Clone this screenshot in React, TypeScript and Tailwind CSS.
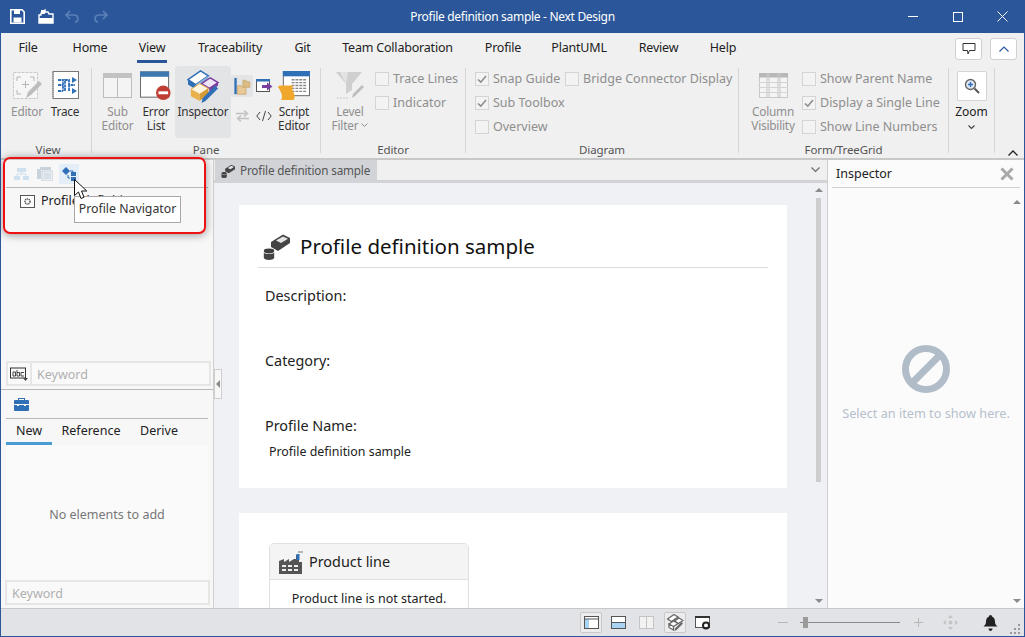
import React from "react";

const F = "font-['Noto_Sans',sans-serif]";

function Check({ label, checked, w }: { label: string; checked?: boolean; w?: string }) {
  return (
    <div className={`flex items-center h-6 gap-[4px] text-[12.5px] text-[#8e8e8e] whitespace-nowrap ${w ?? ""}`}>
      <span className="w-[14px] h-[14px] border border-[#d4d4d4] bg-[#f3f3f3] flex items-center justify-center shrink-0">
        {checked && (
          <svg width="10" height="10" viewBox="0 0 10 10"><path d="M1 5.5 L3.8 8.2 L9 2" fill="none" stroke="#8c8c8c" strokeWidth="1.6" /></svg>
        )}
      </span>
      <span>{label}</span>
    </div>
  );
}

function GroupSep() {
  return <div className="w-px bg-[#d6d6d6] self-stretch my-[5px] shrink-0" />;
}

function Group({ w, label, children }: { w: string; label: string; children: React.ReactNode }) {
  return (
    <div className={`flex flex-col shrink-0 h-full ${w}`}>
      <div className="flex-1 flex min-h-0">{children}</div>
      <div className="h-[16px] text-center text-[11.5px] tracking-[-0.1px] leading-[16px] text-[#555]">{label}</div>
    </div>
  );
}

function BigBtn({ w, icon, lines, dim, cls, top }: { w: string; icon: React.ReactNode; lines: React.ReactNode[]; dim?: boolean; cls?: string; top?: string }) {
  return (
    <div className={`flex flex-col items-center shrink-0 ${top ?? "pt-[8px]"} ${w} ${cls ?? ""}`}>
      <div className="h-[29px] w-full flex items-start justify-center">{icon}</div>
      <div className={`mt-[4px] text-center text-[11.8px] tracking-[-0.2px] leading-[14px] ${dim ? "text-[#8e8e8e]" : "text-[#333]"}`}>
        {lines.map((l, i) => <div key={i} className="whitespace-nowrap flex items-center justify-center">{l}</div>)}
      </div>
    </div>
  );
}

const EditorIcon = () => (
  <svg width="30" height="30" viewBox="0 0 30 30">
    <rect x="1.5" y="1.5" width="24" height="26" fill="#f6f6f6" stroke="#c8c8c8" strokeDasharray="3 1" />
    <path d="M9 6H5v4M18 6h4v4M5 19v4h4" fill="none" stroke="#b5b5b5" />
    <path d="M13.5 10v7M10 13.5h7" stroke="#b5b5b5" />
    <path d="M14 27l2-6 11-11 3 3-11 11z" fill="#bdbdbd" />
  </svg>
);
const TraceIcon = () => (
  <svg width="27" height="28" viewBox="0 0 27 28">
    <rect x="1" y="0.5" width="25.5" height="27" fill="#fff" stroke="#777" />
    <path d="M1 1v26" stroke="#999" strokeDasharray="1 1" strokeWidth="2" />
    <path d="M6 9h5v11M6 14h5M6 20h5M13 20V9h4v5h6M17 20v-6" fill="none" stroke="#2f6fb5" strokeWidth="1.8" strokeDasharray="3 0.6" />
    <path d="M20 6l5 3-5 3zM20 17l5 3-5 3z" fill="#2f6fb5" />
  </svg>
);
const SubEditorIcon = () => (
  <svg width="29" height="25" viewBox="0 0 29 25">
    <rect x="0.5" y="0.5" width="28" height="24" fill="#f4f4f4" stroke="#bdbdbd" />
    <rect x="0" y="0" width="29" height="5" fill="#c2c2c2" />
    <path d="M14.5 5v19" stroke="#bdbdbd" />
  </svg>
);
const ErrorListIcon = () => (
  <svg width="33" height="30" viewBox="0 0 33 30">
    <rect x="0.5" y="0.5" width="29" height="26" fill="#fff" stroke="#666" />
    <rect x="0" y="0" width="30" height="5.5" fill="#3f77b0" />
    <circle cx="24" cy="22" r="7.5" fill="#bf3d32" />
    <rect x="19" y="20.5" width="10" height="3" fill="#fff" />
  </svg>
);
const InspectorIcon = ({ s = 33 }: { s?: number }) => (
  <svg width={s} height={s} viewBox="0 0 34 34">
    <path d="M1 10 L14 1 L22 6 L9 15z" fill="#fff" stroke="#2f6fb5" strokeWidth="1.5" />
    <path d="M1 10 L9 15 V20 L1 15z" fill="#2f6fb5" />
    <path d="M9 15 L22 6 V10 L9 20z" fill="#8cb0d6" />
    <path d="M15 14 L24 8 L32 13 L23 19z" fill="#efe6f5" stroke="#7a3fa0" strokeWidth="1.5" />
    <path d="M23 19 L32 13 V16 L23 23z" fill="#7a3fa0" />
    <path d="M4 20 L13 14 L22 19 L13 25z" fill="#fff4dc" stroke="#e6b04a" />
    <path d="M4 20 L13 25 V32 L4 27z" fill="#e9b04c" />
    <path d="M13 25 L22 19 V24 L13 32z" fill="#d59a33" />
    <path d="M15 34 l1-5 L29 16 l3 3 L19 32z" fill="#2f6fb5" />
  </svg>
);
const FoldersIcon = () => (
  <svg width="17" height="17" viewBox="0 0 21 22">
    <rect x="0" y="0" width="3" height="21" fill="#2f6fb5" />
    <path d="M11 3h4l1 2h4v7H11z" fill="#dcbc86" stroke="#c9a56a" />
    <path d="M4 10h5l1 2h5v9H4z" fill="#e8c995" stroke="#c9a56a" />
  </svg>
);
const PaneArrowIcon = () => (
  <svg width="17" height="14" viewBox="0 0 17 14">
    <rect x="0.5" y="0.5" width="13" height="12" fill="#fff" stroke="#555" />
    <rect x="0" y="0" width="14" height="2.5" fill="#2f6fb5" />
    <path d="M6 6h5V3.500L16.500 7.500 11 11.500V9H6z" fill="#7a3fa0" />
  </svg>
);
const ScriptIcon = () => (
  <svg width="32" height="30" viewBox="0 0 33 31">
    <rect x="5.500" y="0.500" width="27" height="25" fill="#fff" stroke="#666" />
    <rect x="5" y="0" width="28" height="5.500" fill="#2f6fb5" />
    <path d="M14 9h15M14 12h15M14 15h15M14 18h15M14 21h15" stroke="#888" strokeWidth="1.400" strokeDasharray="3 1" />
    <path d="M3 15h13c-2 2-1 5 0 7 1 3 2 5 0 8H3c2-3 1-5 0-8-1-2-2-5-3-5 0-1 1-2 3-2z" fill="#f0a82c" />
  </svg>
);
const FilterIcon = () => (
  <svg width="30" height="30" viewBox="0 0 30 30">
    <path d="M1 1h26L17 13v6l-6 4V13z" fill="#cfcfcf" />
    <path d="M5 1h8L11 13z" fill="#e3e3e3" />
    <path d="M17 27l1-4 9-9 2 2-9 9z" fill="#bdbdbd" />
    <path d="M2 27h12" stroke="#c8c8c8" strokeDasharray="2 1" />
  </svg>
);
const ColumnIcon = () => (
  <svg width="29" height="25" viewBox="0 0 29 25">
    <rect x="0.5" y="0.5" width="28" height="24" fill="#f4f4f4" stroke="#c8c8c8" />
    <rect x="0" y="0" width="29" height="4.5" fill="#b8b8b8" />
    <path d="M8 0v25M10 0v25M19 0v25M21 0v25" stroke="#c6c6c6" />
    <path d="M0 9.5h29M0 14.5h29M0 19.5h29" stroke="#d4d4d4" />
  </svg>
);

const ProfileIcon = ({ s = 27 }: { s?: number }) => (
  <svg width={s} height={s} viewBox="0 0 27 27">
    <path d="M8 9 L20 1.5 L27 5 V10 L15 18 L8 14z" fill="#444" />
    <path d="M13 7.5 L20 3.5 L25 5.8 L18 10z" fill="#e4e4e4" />
    <ellipse cx="6" cy="18" rx="5.2" ry="2.4" fill="#3e3e3e" />
    <path d="M0.8 19.5 V25 c1 2.6 9.4 2.6 10.4 0 V19.5 c-1.5 2 -9 2 -10.4 0z" fill="#444" />
  </svg>
);

const FactoryIcon = () => (
  <svg width="24" height="24" viewBox="0 0 24 24">
    <path d="M0 24V11l5-2v3l5-3v3l5-3 2 0V5h3v7h3v12z" fill="#555" />
    <rect x="17.5" y="4" width="3" height="6" fill="#2f6fb5" />
    <path d="M19 2h5" stroke="#777" />
    <path d="M3 15h4v2H3zM9 15h4v2H9zM15 15h4v2h-4zM3 19h4v2H3zM9 19h4v2H9zM15 19h4v2h-4z" fill="#eee" />
  </svg>
);

function KeywordBox({ icon, cls }: { icon?: boolean; cls: string }) {
  return (
    <div className={`flex items-center h-[25px] border-2 border-[#e6e6e6] bg-[#f9f9f9] text-[12.5px] leading-[23px] text-[#b0b0b0] ${cls}`}>
      {icon && (
        <div className="w-[24px] h-full border-r-2 border-[#e6e6e6] flex items-center justify-center shrink-0">
          <svg width="18" height="14" viewBox="0 0 18 14">
            <rect x="0.5" y="1" width="15" height="10" fill="none" stroke="#333" />
            <path d="M3 5h2.500v4H3zM7 3v6h2.500V5.500H7M11 5.500h3M11 5.500v3.500h3" fill="none" stroke="#333" strokeWidth="0.9" />
            <path d="M13 11h5l-2.500 3z" fill="#444" />
          </svg>
        </div>
      )}
      <span className="pl-[5px] pt-[1px]">Keyword</span>
    </div>
  );
}

const Tri = () => (
  <svg width="8" height="4" viewBox="0 0 10 5"><path d="M0 5 L5 0 L10 5z" fill="#8a8a8a" /></svg>
);
const TriDown = () => (
  <svg width="8" height="4" viewBox="0 0 10 5"><path d="M0 0 L5 5 L10 0z" fill="#8a8a8a" /></svg>
);

export default function App() {
  const tabs: [string, string][] = [
    ["File", "w-[54px]"], ["Home", "w-[70px]"], ["View", "w-[54px]"], ["Traceability", "w-[102px]"],
    ["Git", "w-[43px]"], ["Team Collaboration", "w-[147px]"], ["Profile", "w-[64px]"], ["PlantUML", "w-[88px]"],
    ["Review", "w-[71px]"], ["Help", "w-[58px]"],
  ];
  return (
    <div className={`relative w-[1025px] h-[637px] overflow-hidden bg-[#2b579a] flex flex-col ${F}`}>
      {/* Title bar */}
      <div className="h-[33px] shrink-0 flex items-center text-white relative">
        <div className="flex items-center pl-[10px]">
          <svg width="15" height="15" viewBox="0 0 15 15">
            <path d="M0.8 0.8H12L14.2 3V14.2H0.8z" fill="none" stroke="#fff" strokeWidth="1.6" />
            <rect x="4" y="1" width="6" height="4" fill="#fff" />
            <rect x="3.5" y="8.5" width="8" height="5" fill="#fff" />
          </svg>
          <svg width="16" height="15" viewBox="0 0 16 15" className="ml-[13px]">
            <path d="M1 6h2V4l4-3v2h3l1 2h4v9H1z" fill="none" stroke="#fff" strokeWidth="1.4" />
            <path d="M1 9h14v5H1zM3 1h4v4H3z" fill="#fff" />
          </svg>
          <svg width="15" height="13" viewBox="0 0 15 13" className="ml-[11px]">
            <path d="M5 1L1 5l4 4M1 5h8c5 0 5 7 1 7" fill="none" stroke="#5b80b8" strokeWidth="1.7" />
          </svg>
          <svg width="15" height="13" viewBox="0 0 15 13" className="ml-[13px]">
            <path d="M10 1l4 4-4 4M14 5H6c-5 0-5 7-1 7" fill="none" stroke="#5b80b8" strokeWidth="1.7" />
          </svg>
        </div>
        <div className="absolute left-0 right-0 text-center text-[12px] tracking-[-0.3px] leading-[36px]">Profile definition sample - Next Design</div>
        <div className="ml-auto flex items-center">
          <div className="w-[45px] flex justify-center"><div className="w-[10px] h-px bg-white" /></div>
          <div className="w-[45px] flex justify-center"><div className="w-[10px] h-[10px] border border-white" /></div>
          <div className="w-[45px] flex justify-center">
            <svg width="11" height="11" viewBox="0 0 11 11"><path d="M0.5 0.5L10.5 10.5M10.5 0.5L0.5 10.5" stroke="#fff" /></svg>
          </div>
        </div>
      </div>

      {/* Client */}
      <div className="flex-1 min-h-0 mx-px mb-px bg-[#f0f0f0] flex flex-col">
        {/* Tabs */}
        <div className="h-[30px] shrink-0 flex items-stretch relative text-[12.5px] tracking-[-0.2px] text-[#222]">
          {tabs.map(([t, w]) => (
            <div key={t} className={`relative flex items-center justify-center ${w} whitespace-nowrap`}>
              {t}
              {t === "View" && <div className="absolute bottom-0 left-[12px] w-[30px] h-[3px] bg-[#2b579a]" />}
            </div>
          ))}
          <div className="ml-auto flex items-center gap-[8px] pr-[7px] pt-[1px]">
            <div className="w-[27px] h-[22px] bg-white border border-[#d0d0d0] rounded-[3px] flex items-center justify-center">
              <svg width="14" height="14" viewBox="0 0 14 14"><path d="M1 1.500h12v7H7.500L6 12 5.500 8.500H1z" fill="none" stroke="#333" /></svg>
            </div>
            <div className="w-[27px] h-[22px] bg-white border border-[#d0d0d0] rounded-[3px] flex items-center justify-center">
              <svg width="10" height="6" viewBox="0 0 10 6"><path d="M0.500 5.500L5 1l4.500 4.500" fill="none" stroke="#2b579a" strokeWidth="1.200" /></svg>
            </div>
          </div>
        </div>

        {/* Ribbon body */}
        <div className="h-[95px] shrink-0 flex items-stretch pl-[4px] relative">
          <Group w="w-[86px]" label="View">
            <BigBtn w="w-[42px] ml-[1px]" dim icon={<EditorIcon />} lines={["Editor"]} />
            <BigBtn w="w-[34px]" icon={<TraceIcon />} lines={["Trace"]} />
          </Group>
          <GroupSep />
          <Group w="w-[228px]" label="Pane">
            <BigBtn w="w-[45px] ml-[3px]" dim icon={<div className="pt-[2px]"><SubEditorIcon /></div>} lines={["Sub", "Editor"]} />
            <BigBtn w="w-[32px]" icon={<ErrorListIcon />} lines={["Error", "List"]} />
            <div className="ml-[3px] w-[56px] h-[72px] mt-[3px] bg-[#e3e4e6] rounded-[3px] shrink-0">
              <BigBtn w="w-full" top="pt-[5px]" icon={<div className="-mt-[1px]"><InspectorIcon /></div>} lines={["Inspector"]} />
            </div>
            <div className="w-[47px] flex flex-col shrink-0">
              <div className="flex items-center h-[22px] mt-[12px]">
                <div className="w-[22px] h-[22px] bg-[#e3e4e6] rounded-[2px] flex items-center justify-center"><FoldersIcon /></div>
                <div className="ml-[3px]"><PaneArrowIcon /></div>
              </div>
              <div className="flex items-center h-[26px] pl-[5px] gap-[7px] mt-[6px]">
                <svg width="13" height="12" viewBox="0 0 13 12"><path d="M0 3.500h10M8 0.500l3.500 3-3.500 3M13 8.500H3M5 5.500l-3.500 3 3.500 3" fill="none" stroke="#c0c0c0" strokeWidth="1.400" /></svg>
                <svg width="16" height="12" viewBox="0 0 16 12"><path d="M4 2L0.800 6 4 10M12 2l3.200 4L12 10M9.500 1L6.500 11" fill="none" stroke="#444" /></svg>
              </div>
            </div>
            <BigBtn w="w-[32px]" icon={<ScriptIcon />} lines={["Script", "Editor"]} />
          </Group>
          <GroupSep />
          <Group w="w-[144px]" label="Editor">
            <BigBtn w="w-[50px] ml-[4px]" dim icon={<FilterIcon />} lines={["Level", <>Filter<svg width="7" height="5" viewBox="0 0 7 5" className="ml-[3px]"><path d="M0.500 0.500L3.500 3.500 6.500 0.500" fill="none" stroke="#8e8e8e" /></svg></>]} />
            <div className="pt-[4px]">
              <Check label="Trace Lines" />
              <Check label="Indicator" />
            </div>
          </Group>
          <GroupSep />
          <Group w="w-[272px]" label="Diagram">
            <div className="pt-[4px] pl-[9px] w-[99px] shrink-0">
              <Check checked label="Snap Guide" />
              <Check checked label="Sub Toolbox" />
              <Check label="Overview" />
            </div>
            <div className="pt-[4px]">
              <Check label="Bridge Connector Display" />
            </div>
          </Group>
          <GroupSep />
          <Group w="w-[209px]" label="Form/TreeGrid">
            <BigBtn w="w-[56px] ml-[6px]" dim icon={<div className="pt-[2px]"><ColumnIcon /></div>} lines={["Column", "Visibility"]} />
            <div className="pt-[4px] ml-[1px]">
              <Check label="Show Parent Name" />
              <Check checked label="Display a Single Line" />
              <Check label="Show Line Numbers" />
            </div>
          </Group>
          <GroupSep />
          <div className="w-[45px] shrink-0 flex flex-col items-center pt-[8px]">
            <div className="w-[30px] h-[30px] bg-white border border-[#d4d4d4] rounded-[2px] flex items-center justify-center">
              <svg width="16" height="16" viewBox="0 0 16 16">
                <circle cx="6.500" cy="6.500" r="5" fill="#dfe9f5" stroke="#666" strokeWidth="1.400" />
                <path d="M4 6.500h5M6.500 4v5" stroke="#2f6fb5" strokeWidth="1.400" />
                <path d="M10.500 10.500L15 15" stroke="#555" strokeWidth="2" />
              </svg>
            </div>
            <div className="text-[12px] leading-[14px] mt-[4px] text-[#222]">Zoom</div>
            <svg width="7" height="5" viewBox="0 0 7 5" className="mt-[6px]"><path d="M0.500 0.500L3.500 3.500 6.500 0.500" fill="none" stroke="#444" strokeWidth="1.200" /></svg>
          </div>
          <GroupSep />
          <div className="flex-1 flex items-end justify-end pr-[6px] pb-[2px]">
            <svg width="10" height="6" viewBox="0 0 10 6"><path d="M0.500 5.500L5 1l4.500 4.500" fill="none" stroke="#222" strokeWidth="1.300" /></svg>
          </div>
        </div>

        {/* Main */}
        <div className="flex-1 min-h-0 flex border-t-2 border-[#c8c8c8]">
          {/* Left */}
          <div className="w-[213px] shrink-0 bg-[#f7f7f7] flex flex-col border-r border-[#cfcfcf] text-[12.5px]">
            <div className="h-[28px] mx-[5px] border-b border-[#b8b8b8] flex items-center shrink-0 pl-[8px]">
              <svg width="15" height="12" viewBox="0 0 15 12"><path d="M3 0h9v4H3zM0 8h6v4H0zM9 8h6v4H9z" fill="#cfe0ef" /><path d="M7.500 4v2M3 8V6h9v2" stroke="#cfe0ef" fill="none" /></svg>
              <svg width="16" height="14" viewBox="0 0 16 14" className="ml-[8px]"><rect x="3" y="0" width="11" height="3" fill="#c9d3dc" /><rect x="0" y="2" width="4" height="10" fill="#c9d3dc" /><rect x="5" y="4" width="11" height="10" fill="#e6ecf1" stroke="#c9d3dc" /><path d="M7 7h7M7 9h7M7 11h7" stroke="#c9d3dc" /></svg>
              <div className="ml-[6px] w-[20px] h-[20px] bg-[#e3eef8] flex items-center justify-center">
                <svg width="15" height="14" viewBox="0 0 15 14"><path d="M0 4l4-4 4 4-4 4z" fill="#2f6fb5" /><path d="M8 4h3v2M6 8v3h2" stroke="#2f6fb5" fill="none" /><rect x="9" y="5" width="5" height="4" fill="#2f6fb5" /><rect x="9" y="10" width="5" height="4" fill="#2f6fb5" /></svg>
              </div>
            </div>
            <div className="h-[24px] mt-[1px] flex items-center pl-[19px] gap-[6px] shrink-0 whitespace-nowrap text-[#222]">
              <span className="w-[15px] h-[13px] border border-[#555] bg-white flex items-center justify-center">
                <svg width="9" height="9" viewBox="0 0 9 9"><circle cx="4.500" cy="4.500" r="2.500" fill="none" stroke="#555" strokeWidth="1.600" strokeDasharray="1.200 0.600" /></svg>
              </span>
              <span>Profile definitions</span>
            </div>
            <div className="flex-1" />
            <KeywordBox icon cls="ml-[5px] w-[205px] shrink-0" />
            <div className="h-[3px] shrink-0" />
            <div className="border-b border-[#b8b8b8] shrink-0" />
            <div className="h-[29px] mx-[5px] border-b border-[#b8b8b8] flex items-center pl-[8px] shrink-0">
              <svg width="15" height="14" viewBox="0 0 15 14">
                <path d="M4 3V1h7v2h3a1 1 0 0 1 1 1v3H0V4a1 1 0 0 1 1-1zM5 3h5V2H5z" fill="#2f6fb5" />
                <path d="M0 8h3v1h2V8h5v1h2V8h3v5a1 1 0 0 1-1 1H1a1 1 0 0 1-1-1z" fill="#2f6fb5" />
              </svg>
            </div>
            <div className="flex h-[26px] mx-[5px] shrink-0 text-[#222]">
              <div className="w-[46px] text-center leading-[23px] border-b-[3px] border-[#4a9bd1]">New</div>
              <div className="w-[78px] text-center leading-[23px]">Reference</div>
              <div className="w-[56px] text-center leading-[23px] pl-[2px]">Derive</div>
            </div>
            <div className="basis-[135px] flex items-center justify-center text-[#777] bg-[#fafafa] mx-[5px] grow-0 shrink-0 pt-[6px]">No elements to add</div>
            <KeywordBox cls="ml-[4px] w-[205px] mb-[3px] shrink-0" />
          </div>

          {/* Center */}
          <div className="flex-1 min-w-0 bg-[#f0f1f5] flex flex-col relative">
            <div className="h-[20px] flex shrink-0 bg-[#f0f0f0]">
              <div className="w-[162px] ml-px bg-[#d1d3d7] flex items-center pl-[6px] pt-[1px] gap-[5px] text-[11.7px] tracking-[-0.15px] text-[#555] whitespace-nowrap">
                <ProfileIcon s={14} />
                <span>Profile definition sample</span>
              </div>
              <div className="ml-auto w-[24px] flex items-center justify-center">
                <svg width="9" height="6" viewBox="0 0 9 6"><path d="M0.500 0.500L4.500 4.500 8.500 0.500" fill="none" stroke="#666" strokeWidth="1.100" /></svg>
              </div>
            </div>
            <div className="h-[3px] bg-[#d1d3d7] shrink-0" />
            <div className="flex-1 min-h-0 flex overflow-hidden">
              <div className="flex-1 min-w-0 overflow-hidden pl-[25px] pr-[26px] pt-[22px] flex flex-col gap-[25px]">
                <div className="bg-white h-[283px] shrink-0 pt-[24px] px-[19px] text-[14.4px] text-[#222]">
                  <div className="flex items-center gap-[10px] h-[39px] border-b border-[#dcdcdc] pb-[4px] text-[20.500px] text-[#111] whitespace-nowrap pl-[5px]">
                    <ProfileIcon />
                    <span>Profile definition sample</span>
                  </div>
                  <div className="pl-[7px] pt-[18px] leading-[20px]">Description:</div>
                  <div className="pl-[7px] pt-[45px] leading-[20px]">Category:</div>
                  <div className="pl-[7px] pt-[45px] leading-[20px]">Profile Name:</div>
                  <div className="pl-[11px] pt-[6px] leading-[20px] text-[12.4px]">Profile definition sample</div>
                </div>
                <div className="bg-white shrink-0 h-[200px] pt-[30px] pl-[30px]">
                  <div className="w-[200px] h-[100px] border border-[#e0e0e0] rounded-[5px] overflow-hidden">
                    <div className="h-[36px] bg-[#f4f4f4] border-b border-[#e0e0e0] flex items-center pl-[9px] gap-[6px] text-[14.4px] text-[#222] whitespace-nowrap">
                      <FactoryIcon />
                      <span className="pt-[1px]">Product line</span>
                    </div>
                    <div className="text-center text-[12.5px] text-[#222] pt-[10px] leading-[18px]">Product line is not started.</div>
                  </div>
                </div>
              </div>
              <div className="w-[14px] shrink-0 flex flex-col items-center pt-[5px] pr-[3px]">
                <Tri />
                <div className="w-[5px] h-[284px] bg-[#cdcdcd] mt-[6px]" />
                <div className="mt-auto mb-[5px]"><TriDown /></div>
              </div>
            </div>
            {/* Collapse handle */}
            <div className="absolute left-0 top-[209px] w-[8px] h-[30px] bg-[#f7f7f7] border border-[#cfcfcf] flex items-center justify-center">
              <svg width="4" height="8" viewBox="0 0 4 8"><path d="M4 0v8L0 4z" fill="#8a8a8a" /></svg>
            </div>
          </div>

          {/* Right */}
          <div className="w-[197px] shrink-0 bg-[#fbfbfb] border-l border-[#cfcfcf] flex flex-col">
            <div className="h-[28px] mx-[4px] border-b border-[#d0d0d0] flex items-center justify-between pl-[4px] pr-[6px] text-[12.5px] text-[#222] shrink-0">
              <span className="pt-[1px]">Inspector</span>
              <svg width="14" height="14" viewBox="0 0 14 14"><path d="M1.500 1.500L12.500 12.500M12.500 1.500L1.500 12.500" stroke="#a8a8a8" strokeWidth="3" /></svg>
            </div>
            <div className="flex-1 min-h-0 flex flex-col relative">
              <div className="flex justify-end pr-[3px] pt-[12px]"><Tri /></div>
              <div className="flex flex-col items-center mt-[141px]">
                <svg width="48" height="48" viewBox="0 0 48 48">
                  <circle cx="24" cy="24" r="20.500" fill="none" stroke="#b0bcc8" strokeWidth="7" />
                  <path d="M10 38L38 10" stroke="#b0bcc8" strokeWidth="7" />
                </svg>
                <div className="text-[12.700px] text-[#b6c0cc] mt-[11px] whitespace-nowrap">Select an item to show here.</div>
              </div>
              <div className="mt-auto flex justify-end pr-[3px] pb-[5px]"><TriDown /></div>
            </div>
          </div>
        </div>

        {/* Status bar */}
        <div className="h-[28px] shrink-0 bg-[#e2e3e6] border-t border-[#c8c8c8] flex items-center pl-[579px]">
          <div className="w-[22px] h-[21px] border border-[#c8c8c8] rounded-[2px] bg-[#ececee] flex items-center justify-center shrink-0">
            <svg width="15" height="13" viewBox="0 0 15 13"><rect x="0.500" y="0.500" width="14" height="12" fill="#fff" stroke="#555" /><rect x="1" y="3" width="4" height="9" fill="#a9d3f2" /><path d="M1 3h13" stroke="#555" /></svg>
          </div>
          <svg width="15" height="13" viewBox="0 0 15 13" className="ml-[9px] shrink-0"><rect x="0.500" y="0.500" width="14" height="12" fill="#fff" stroke="#555" /><rect x="1" y="7" width="13" height="5" fill="#a9d3f2" /><path d="M1 6.500h13" stroke="#555" /></svg>
          <svg width="15" height="13" viewBox="0 0 15 13" className="ml-[13px] shrink-0"><rect x="0.500" y="0.500" width="14" height="12" fill="#f2f2f2" stroke="#c4c4c4" /><path d="M7.500 1v11" stroke="#c4c4c4" /></svg>
          <div className="ml-[10px] w-[22px] h-[21px] border border-[#c8c8c8] rounded-[2px] bg-[#ececee] flex items-center justify-center shrink-0">
            <svg width="17" height="17" viewBox="0 0 34 34">
              <path d="M1 10 L14 1 L22 6 L9 15z M15 14 L24 8 L32 13 L23 19z M4 20 L13 14 L22 19 L13 25z M4 20 L13 25 V32 L4 27z" fill="#fff" stroke="#666" strokeWidth="2.500" />
              <path d="M15 34 l1-5 L29 16 l3 3 L19 32z" fill="#666" />
            </svg>
          </div>
          <svg width="16" height="14" viewBox="0 0 16 14" className="ml-[9px] shrink-0"><rect x="0.500" y="0.500" width="14" height="11" fill="#fff" stroke="#555" /><path d="M0 1h15" stroke="#333" strokeWidth="2" /><circle cx="11" cy="9.500" r="3" fill="none" stroke="#222" strokeWidth="2" /></svg>
          <div className="ml-[67px] w-[10px] h-px bg-[#b8b8b8] shrink-0" />
          <div className="ml-[12px] w-[100px] h-px bg-[#8a8a8a] relative shrink-0">
            <div className="absolute left-[3px] -top-[5px] w-[5px] h-[11px] bg-[#9a9a9a]" />
          </div>
          <svg width="11" height="11" viewBox="0 0 11 11" className="ml-[13px] shrink-0"><path d="M5.500 1v9M1 5.500h9" stroke="#b8b8b8" /></svg>
          <svg width="15" height="15" viewBox="0 0 15 15" className="ml-[19px] shrink-0"><path d="M7.500 0l2.500 3H5zM7.500 15L5 12h5zM0 7.500L3 5v5zM15 7.500L12 10V5z" fill="#c4c4c4" /><circle cx="7.500" cy="7.500" r="2" fill="#c4c4c4" /></svg>
          <svg width="15" height="16" viewBox="0 0 15 16" className="ml-[25px] shrink-0"><path d="M7.500 0c1 0 1.500 1 1.500 1.500c2.500 1 3 3 3 5.500 0 2 1 3 2.500 4.500H0.500C2 10 3 9 3 7c0-2.500.5-4.500 3-5.500C6 1 6.500 0 7.500 0z" fill="#222" /><path d="M5.500 13.500h4c0 1.500-1 2.500-2 2.500s-2-1-2-2.500z" fill="#222" /></svg>
          <svg width="11" height="11" viewBox="0 0 11 11" className="ml-[12px] self-end mb-[2px] shrink-0"><path d="M8 1h2v2H8zM4 5h2v2H4zM8 5h2v2H8zM0 9h2v2H0zM4 9h2v2H4zM8 9h2v2H8z" fill="#999" /></svg>
        </div>
      </div>

      {/* Annotation highlight */}
      <div className="absolute left-[3px] top-[157px] w-[203px] h-[77px] border-2 border-[#ee1111] rounded-[7px] shadow-[0_1px_8px_rgba(0,0,0,0.4)]" />
      {/* Tooltip */}
      <div className="absolute left-[74px] top-[196px] w-[107px] h-[27px] bg-white border border-[#a8a8a8] text-[12.300px] text-[#333] flex items-center justify-center whitespace-nowrap">Profile Navigator</div>
      {/* Cursor */}
      <svg width="14" height="21" viewBox="0 0 14 21" className="absolute left-[74px] top-[179px]">
        <path d="M0.500 0.500V16.500L4.500 13 7 19.500 10 18.200 7.500 12H12.800z" fill="#fff" stroke="#111" strokeWidth="1" />
      </svg>
    </div>
  );
}
